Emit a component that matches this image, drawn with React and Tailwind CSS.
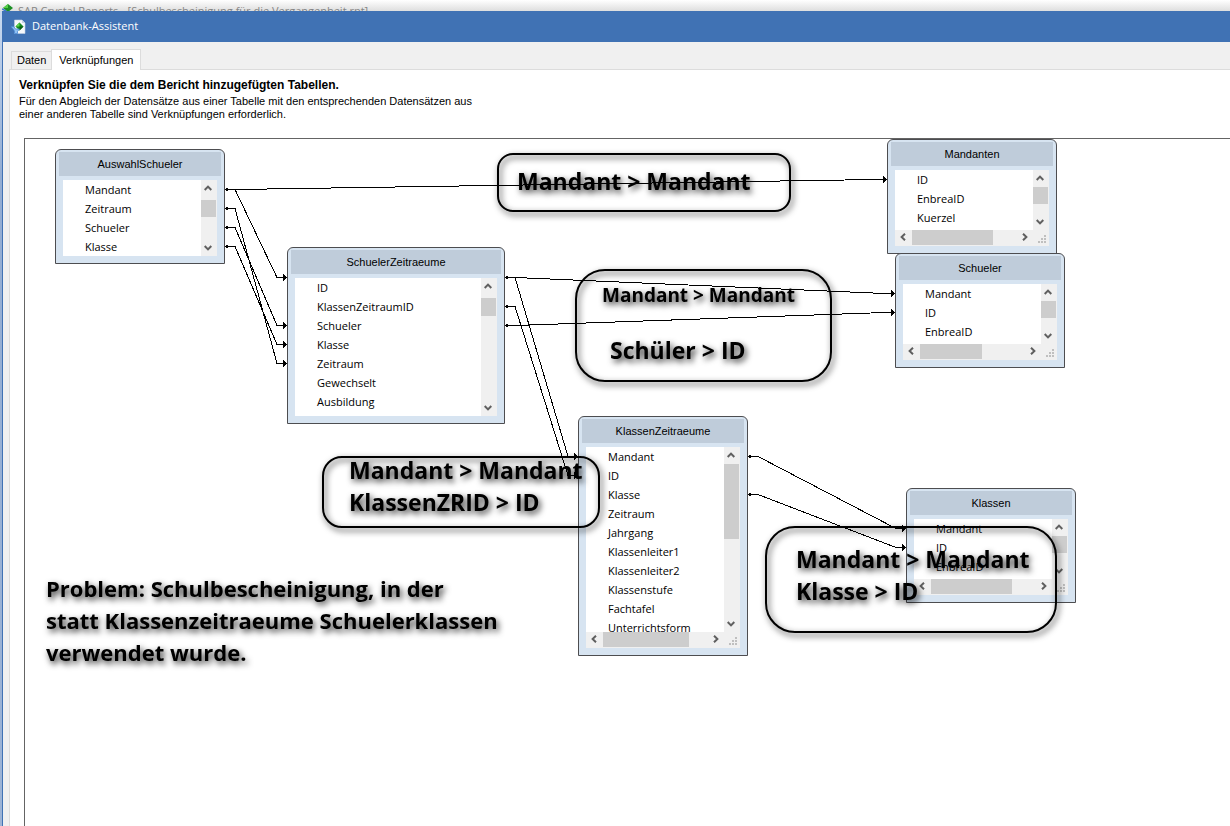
import React from "react";

const TABLES = [
  { name: "AuswahlSchueler", place: "left-[30px] top-[10px] w-[170px] h-[115px]", fields: ["Mandant", "Zeitraum", "Schueler", "Klasse"], gap: "pt-[20px]", thumb: "h-[17px]" },
  { name: "SchuelerZeitraeume", place: "left-[262px] top-[108px] w-[218px] h-[177px]", fields: ["ID", "KlassenZeitraumID", "Schueler", "Klasse", "Zeitraum", "Gewechselt", "Ausbildung"], gap: "pt-[20px]", thumb: "h-[18px]" },
  { name: "Mandanten", place: "left-[862px] top-0 w-[170px] h-[115px]", fields: ["ID", "EnbreaID", "Kuerzel"], gap: "pt-[17px]", thumb: "h-[17px]", across: "w-[81px]" },
  { name: "Schueler", place: "left-[870px] top-[114px] w-[170px] h-[115px]", fields: ["Mandant", "ID", "EnbreaID"], gap: "pt-[17px]", thumb: "h-[17px]", across: "w-[62px]" },
  { name: "KlassenZeitraeume", place: "left-[553px] top-[277px] w-[170px] h-[240px]", fields: ["Mandant", "ID", "Klasse", "Zeitraum", "Jahrgang", "Klassenleiter1", "Klassenleiter2", "Klassenstufe", "Fachtafel", "Unterrichtsform"], gap: "pt-[17px]", thumb: "h-[75px]", across: "w-[86px]" },
  { name: "Klassen", place: "left-[881px] top-[349px] w-[170px] h-[115px]", fields: ["Mandant", "ID", "EnbreaID"], gap: "pt-[17px]", thumb: "h-[17px]", across: "w-[81px]" },
];

// [from x, from y, to x, to y] on the canvas
const LINKS = [
  [200, 50, 862, 40],
  [200, 50, 262, 138],
  [200, 69, 262, 224],
  [200, 88, 262, 186],
  [200, 107, 262, 205],
  [480, 138, 870, 154],
  [480, 186, 870, 173],
  [480, 138, 553, 317],
  [480, 167, 553, 336],
  [723, 317, 881, 389],
  [723, 355, 881, 408],
];

const SHADOW = "drop-shadow-[2px_3px_3px_rgba(0,0,0,0.85)]";

const NOTES = [
  { frame: "left-[472px] top-[14px] w-[294px] h-[59px] rounded-[16px]" },
  { frame: "left-[550px] top-[130px] w-[257px] h-[113px] rounded-[30px]" },
  { frame: "left-[297px] top-[317px] w-[278px] h-[72px] rounded-[20px]" },
  { frame: "left-[740px] top-[387px] w-[292px] h-[107px] rounded-[30px]" },
];

const CAPTIONS = [
  { place: "left-[492px] top-[26px] text-[23px]", lines: ["Mandant > Mandant"] },
  { place: "left-[577px] top-[140px] text-[19px]", lines: ["Mandant > Mandant"] },
  { place: "left-[585px] top-[195px] text-[23px]", lines: ["Schüler > ID"] },
  { place: "left-[324px] top-[315px] text-[23px]", lines: ["Mandant > Mandant", "KlassenZRID > ID"] },
  { place: "left-[771px] top-[404px] text-[23px]", lines: ["Mandant > Mandant", "Klasse > ID"] },
  { place: "left-[21px] top-[433px] text-[22px]", lines: ["Problem: Schulbescheinigung, in der", "statt Klassenzeitraeume Schuelerklassen", "verwendet wurde."] },
];

const TURN = { up: "", down: "rotate-180", left: "-rotate-90", right: "rotate-90" };

function Arrow({ dir, label }) {
  return (
    <button type="button" aria-label={label} className="flex size-[16px] shrink-0 items-center justify-center">
      <svg viewBox="0 0 8 8" className={`size-2 ${TURN[dir]}`} fill="none" stroke="#606060" strokeWidth="2">
        <path d="M0.7 6 4 2.6 7.3 6" />
      </svg>
    </button>
  );
}

function Grip() {
  return (
    <svg viewBox="0 0 16 16" className="size-4 shrink-0" fill="#bfbfbf">
      <path d="M11 6h2v2h-2zM8 9h2v2H8zM11 9h2v2h-2zM5 12h2v2H5zM8 12h2v2H8zM11 12h2v2h-2z" />
    </svg>
  );
}

function TableNode({ name, place, fields, gap, thumb, across }) {
  return (
    <section className={`absolute flex flex-col rounded-t-[6px] border border-[#4d4d50] bg-[#d7e4f1] px-[7px] pb-[7px] ${place}`}>
      <h2 className="-mx-1 mt-[2px] mb-[4px] h-6 shrink-0 bg-[#bfccda] text-center font-['Liberation_Sans',Arial,sans-serif] text-[11px] leading-6">
        {name}
      </h2>
      <div className="flex min-h-0 flex-1 bg-white">
        <ul className="min-w-0 flex-1 overflow-hidden pl-[22px] text-[11px] leading-[19px]">
          {fields.map((f) => (
            <li key={f}>{f}</li>
          ))}
        </ul>
        <div className={`relative flex w-4 flex-col bg-[#f0f0f0] ${gap}`}>
          <div className="absolute inset-0 flex flex-col items-end justify-between pr-px">
            <Arrow dir="up" label={`${name}: nach oben`} />
            <Arrow dir="down" label={`${name}: nach unten`} />
          </div>
          <div className={`w-[15px] bg-[#cdcdcd] ${thumb}`} />
        </div>
      </div>
      {across && (
        <div className="flex h-4 shrink-0 items-end bg-[#f0f0f0] pb-px">
          <Arrow dir="left" label={`${name}: nach links`} />
          <div className="flex flex-1 pl-px">
            <div className={`h-[15px] bg-[#cdcdcd] ${across}`} />
          </div>
          <Arrow dir="right" label={`${name}: nach rechts`} />
          <Grip />
        </div>
      )}
    </section>
  );
}

function Links() {
  return (
    <svg className="pointer-events-none absolute inset-0 size-full" fill="none" stroke="#000" shapeRendering="crispEdges">
      {LINKS.map(([x1, y1, x2, y2]) => (
        <g key={`${x1}-${y1}-${x2}-${y2}`}>
          <path d={`M${x1} ${y1 + 0.5}H${x1 + 10}L${x2 - 10} ${y2 + 0.5}H${x2}`} />
          <path d={`M${x1 + 1} ${y1 - 1}h2v3h-2z`} fill="#000" stroke="none" />
          <path d={`M${x2 - 4} ${y2 - 3}l4 3.5-4 3.5z`} fill="#000" stroke="none" />
        </g>
      ))}
    </svg>
  );
}

function CrystalIcon() {
  return (
    <svg viewBox="0 0 16 16" className="size-4 shrink-0">
      <path d="M3.500 1h7.500l3 3v10.500H3.500z" fill="#f6f9fc" stroke="#c3d0e2" strokeWidth=".6" />
      <path d="M11 1v3h3z" fill="#c7d3e2" />
      <path d="M8.500 3.500 12.500 7.500 8.500 11.500 4.500 7.500z" fill="#168a20" />
      <path d="M8.500 3.500v4h-4z" fill="#5fd84c" />
      <path d="M12.500 7.500h-4v4z" fill="#0b5c14" />
      <path d="M0 7.500h2.500l2 2.500h4L6.500 12.500v2H3.500v-2.500z" fill="#8fc0f2" stroke="#4585d2" strokeWidth=".8" />
    </svg>
  );
}

export default function App() {
  return (
    <div className="flex min-h-screen flex-col overflow-hidden bg-[#b4cbe8] font-['Open_Sans','Noto_Sans',sans-serif] text-black">
      <div className="flex h-[11px] items-start gap-1 overflow-hidden bg-linear-to-b from-white to-[#dedede] pl-[2px] text-[11px] leading-[22px] whitespace-nowrap text-[#858585]">
        <svg viewBox="0 0 12 11" className="h-[11px] w-3 shrink-0">
          <path d="M6 4l5 4-5 4-5-4z" fill="#1b8f24" />
          <path d="M6 4v4H1z" fill="#56cf48" />
          <path d="M0 9l4 2" stroke="#3c76d0" strokeWidth="1.500" />
        </svg>
        SAP Crystal Reports - [Schulbescheinigung für die Vergangenheit.rpt]
      </div>
      <div className="flex flex-1 bg-linear-to-b from-[#c9daf0] via-[#93add3] via-20% to-[#9db4d6] pl-[2px]">
        <main className="flex min-w-0 flex-1 flex-col border-l border-[#4072b4] bg-[#f0f0f0]">
          <header className="flex h-[31px] items-center gap-[5px] bg-[#4072b4] pl-2 text-[11px] text-white">
            <CrystalIcon />
            <h1>Datenbank-Assistent</h1>
          </header>
          <div className="flex flex-1 flex-col pt-[7px] pl-[6px] font-['Liberation_Sans',Arial,sans-serif] text-[11px]">
            <div role="tablist" className="relative z-10 -mb-px flex items-end pl-[2px]">
              <button type="button" role="tab" aria-selected="false" className="h-[19px] border border-r-0 border-[#dcdcdc] px-[5px] leading-[17px]">
                Daten
              </button>
              <button type="button" role="tab" aria-selected="true" className="h-[21px] border border-b-0 border-[#dcdcdc] bg-white px-[7px] leading-[18px]">
                Verknüpfungen
              </button>
            </div>
            <div className="flex flex-1 flex-col border-t border-l border-[#dcdcdc] bg-white pt-[9px] pl-[9px]">
              <p className="text-[12px] leading-[13px] font-bold">Verknüpfen Sie die dem Bericht hinzugefügten Tabellen.</p>
              <p className="mt-[3px] leading-[13px]">
                Für den Abgleich der Datensätze aus einer Tabelle mit den entsprechenden Datensätzen aus
                <br />
                einer anderen Tabelle sind Verknüpfungen erforderlich.
              </p>
              <div className="relative mt-[17px] ml-[5px] min-h-[687px] flex-1 overflow-hidden border-t border-l border-[#646464] bg-white font-['Open_Sans','Noto_Sans',sans-serif]">
                {TABLES.map((t) => (
                  <TableNode key={t.name} {...t} />
                ))}
                <Links />
                {NOTES.map((n) => (
                  <div key={n.frame} className={`pointer-events-none absolute border-2 border-black ${SHADOW} ${n.frame}`} />
                ))}
                {CAPTIONS.map((c) => (
                  <p key={c.place} className={`pointer-events-none absolute font-bold whitespace-nowrap ${SHADOW} ${c.place} leading-[32px]`}>
                    {c.lines.map((l) => (
                      <span key={l} className="block">{l}</span>
                    ))}
                  </p>
                ))}
              </div>
            </div>
          </div>
        </main>
      </div>
    </div>
  );
}
